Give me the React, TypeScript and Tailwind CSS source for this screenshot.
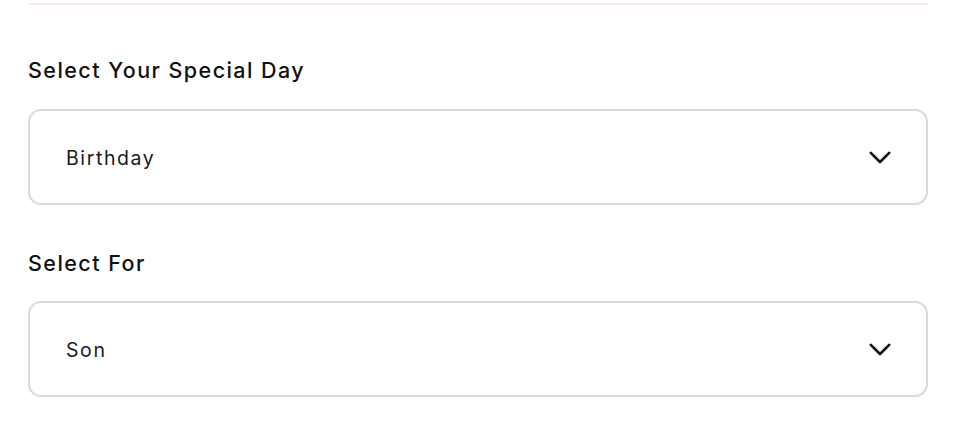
import React from "react";

function Chevron() {
  return (
    <svg width="22" height="13" viewBox="0 0 22 13" fill="none" className="shrink-0">
      <polyline points="1.8,1.8 11,11 20.2,1.8" stroke="#111111" strokeWidth="2.6" strokeLinecap="round" strokeLinejoin="round" />
    </svg>
  );
}

function SelectBox({ value }: { value: string }) {
  return (
    <div className="h-[96px] w-full rounded-[13px] border-2 border-[#dadada] bg-white flex items-center justify-between pl-[36px] pr-[35px]">
      <span className="text-[19.5px] text-[#1a1a1a] tracking-[1.6px] pt-[4px]">{value}</span>
      <Chevron />
    </div>
  );
}

export default function App() {
  return (
    <div className="w-[958px] h-[428px] bg-white pl-[28px] pr-[30px] pt-[3px]" style={{ fontFamily: 'Inter, "Noto Sans", sans-serif' }}>
      <div className="h-[2px] w-full bg-[#fde6ec]" />
      <div className="mt-[51px] h-[28px] leading-[28px] text-[21.5px] font-medium text-[#111111] tracking-[1.45px]">Select Your Special Day</div>
      <div className="mt-[25px]">
        <SelectBox value="Birthday" />
      </div>
      <div className="mt-[44px] h-[28px] leading-[28px] text-[21.5px] font-medium text-[#111111] tracking-[1.45px]">Select For</div>
      <div className="mt-[24px]">
        <SelectBox value="Son" />
      </div>
    </div>
  );
}
